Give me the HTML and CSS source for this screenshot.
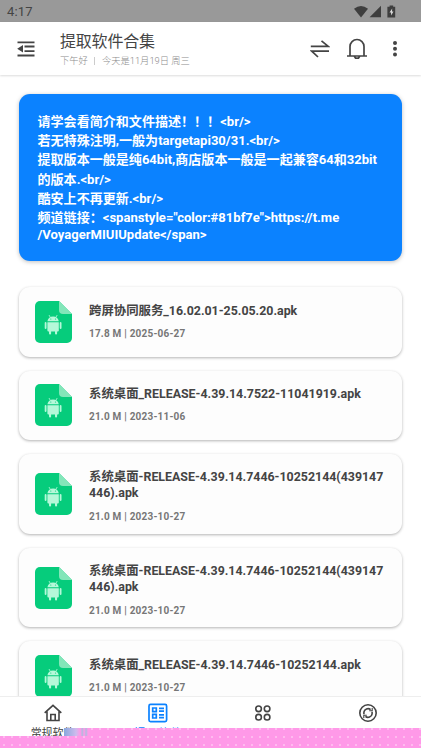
FILE: index.html
```html
<!DOCTYPE html>
<html lang="zh-CN">
<head>
<meta charset="utf-8">
<title>提取软件合集</title>
<link rel="stylesheet" href="styles.css">
</head>
<body>
<svg class="defs" width="0" height="0">
  <symbol id="apk" viewBox="0 0 37 42">
    <path fill="#06cc7c" d="M5 0H24L37 13V37a5 5 0 0 1-5 5H5a5 5 0 0 1-5-5V5a5 5 0 0 1 5-5z"/>
    <path fill="#83e6b9" d="M24 0L37 13H28a4 4 0 0 1-4-4z"/>
    <g fill="#b5f8d9">
      <path d="M12.4 20.3a5.8 5.8 0 0 1 11.4 0zM12.4 21.2H23.8V29.4a1 1 0 0 1-1 1H13.4a1 1 0 0 1-1-1z"/>
      <rect x="9.7" y="21" width="1.8" height="7" rx=".9"/><rect x="24.7" y="21" width="1.8" height="7" rx=".9"/>
      <rect x="14" y="29" width="2.1" height="4.5" rx="1"/><rect x="20" y="29" width="2.1" height="4.5" rx="1"/>
    </g>
    <path d="M14 14l1.2 2.2M22.2 14L21 16.2" stroke="#b5f8d9" stroke-width=".8"/>
    <circle cx="15.8" cy="18" r=".6" fill="#06cc7c"/><circle cx="20.5" cy="18" r=".6" fill="#06cc7c"/>
  </symbol>
</svg>
<div class="app">
  <div class="status">
    <span class="time">4:17</span>
    <svg width="44" height="14" viewBox="0 0 44 14" fill="#3e3e3e"><path d="M0 3.8Q7 -1.8 14 3.8L7 12.4z"/><path d="M27 .8V12.2H15.6z"/><path d="M33.4 1.7h2.2V.5h3.6v1.2h2V12.4h-7.8z"/><path d="M38.2 3.5L35.5 7.6h1.6v3L39.5 6.5h-1.5z" fill="#ddd"/></svg>
  </div>
  <header class="bar">
    <svg class="menu" width="18" height="16" viewBox="0 0 18 16" fill="#444"><path d="M.5 .4h17v1.8H.5zM7.5 4.6h10v1.8h-10zM7.5 9.2h10V11h-10zM.5 13.6h17v1.8H.5zM6 4v7.4L.2 7.7z"/></svg>
    <div class="heading"><h1>提取软件合集</h1><p>下午好<i></i>今天是11月19日 周三</p></div>
    <svg class="swap" width="20" height="18" viewBox="0 0 20 18" fill="none" stroke="#444" stroke-width="1.7"><path d="M.8 6.3H18.2L11.5 .9M19 11.2H1.8L8 17"/></svg>
    <svg class="bell" width="22" height="22" viewBox="0 0 22 22" fill="none" stroke="#444" stroke-width="1.7"><path d="M1 18H21M4 18V8.5a7 7 0 0 1 14 0V18M8.3 18.2a2.8 2.8 0 0 0 5.4 0"/></svg>
    <svg class="more" width="4" height="16" viewBox="0 0 4 16" fill="#444"><circle cx="2" cy="2" r="2"/><circle cx="2" cy="7.8" r="2"/><circle cx="2" cy="13.6" r="2"/></svg>
  </header>
  <main>
    <section class="notice">
      <p>请学会看简介和文件描述！！！&lt;br/&gt;</p>
      <p>若无特殊注明,一般为targetapi30/31.&lt;br/&gt;</p>
      <p>提取版本一般是纯64bit,商店版本一般是一起兼容64和32bit</p>
      <p>的版本.&lt;br/&gt;</p>
      <p>酷安上不再更新.&lt;br/&gt;</p>
      <p>频道链接：&lt;spanstyle="color:#81bf7e"&gt;https://t.me</p>
      <p class="latin">/VoyagerMIUIUpdate&lt;/span&gt;</p>
    </section>
    <article class="card"><svg class="file"><use href="#apk"/></svg><div><h2>跨屏协同服务_16.02.01-25.05.20.apk</h2><p>17.8 M | 2025-06-27</p></div></article>
    <article class="card"><svg class="file"><use href="#apk"/></svg><div><h2>系统桌面_RELEASE-4.39.14.7522-11041919.apk</h2><p>21.0 M | 2023-11-06</p></div></article>
    <article class="card tall"><svg class="file"><use href="#apk"/></svg><div><h2>系统桌面-RELEASE-4.39.14.7446-10252144(439147<br>446).apk</h2><p>21.0 M | 2023-10-27</p></div></article>
    <article class="card tall"><svg class="file"><use href="#apk"/></svg><div><h2>系统桌面-RELEASE-4.39.14.7446-10252144(439147<br>446).apk</h2><p>21.0 M | 2023-10-27</p></div></article>
    <article class="card"><svg class="file"><use href="#apk"/></svg><div><h2>系统桌面_RELEASE-4.39.14.7446-10252144.apk</h2><p>21.0 M | 2023-10-27</p></div></article>
  </main>
  <nav>
    <div class="tab first"><svg width="18" height="18" viewBox="0 0 18 18" fill="none" stroke="#444" stroke-width="1.6"><path d="M.7 8.8L9 1.3l8.3 7.5M3 7.5V16.5H15V7.5M6.8 16V10.5h4.4V16"/></svg><span>常规软件</span></div>
    <div class="tab active"><svg width="20" height="20" viewBox="0 0 20 20" fill="none" stroke="#0b82ff" stroke-width="1.7"><rect x="1" y="1.4" width="17.6" height="17.2" rx="1.5"/><path d="M4.7 5h3.6v3.6H4.7zM4.7 11.4h3.6V15H4.7zM11 5.3h5M11 8.2h5M11 11.8h5M11 14.7h5"/></svg><span>提取软件</span></div>
    <div class="tab"><svg width="18" height="18" viewBox="0 0 18 18" fill="none" stroke="#444" stroke-width="1.6"><circle cx="4.6" cy="4.8" r="2.8"/><circle cx="13.1" cy="4.8" r="2.8"/><circle cx="4.6" cy="13.2" r="2.8"/><circle cx="13.1" cy="13.2" r="2.8"/></svg></div>
    <div class="tab"><svg width="20" height="20" viewBox="0 0 20 20" fill="none" stroke="#444" stroke-width="1.6"><circle cx="10" cy="10" r="8.2"/><path d="M5.9 11.3V9.2a4.1 4.1 0 0 1 6.7-2.6M14.1 8.7v2.1a4.1 4.1 0 0 1-6.7 2.6"/><path d="M11.2 7.8h3V5M8.8 12.2h-3V15" stroke-width="1.1"/></svg></div>
  </nav>
  <div class="band"></div>
  <div class="smudge"></div>
</div>
</body>
</html>
```
FILE: styles.css
```css
* { box-sizing: border-box; margin: 0; padding: 0; }
body { width: 421px; height: 748px; overflow: hidden; background: #fff; color: #444; font-family: Roboto, "Noto Sans CJK SC", sans-serif; }
.defs { position: absolute; }
svg { display: block; flex: none; }
.app { position: relative; height: 748px; display: flex; flex-direction: column; overflow: hidden; }
.status { height: 22px; flex: none; background: #999; display: flex; align-items: center; justify-content: space-between; padding: 1px 23px 0 7px; }
.time { font-size: 13px; letter-spacing: .2px; color: #444; }
.bar { height: 53px; flex: none; display: flex; align-items: center; padding-left: 17px; box-shadow: 0 1px 2px rgba(0,0,0,.14); }
.menu { margin-top: 1px; }
.heading { margin-left: 25px; width: 250px; padding-top: 1px; }
.heading h1 { font-size: 16px; font-weight: 400; line-height: 22px; letter-spacing: -.2px; }
.heading p { font-size: 9.3px; line-height: 15px; color: #8c8c8c; font-weight: 300; }
.heading i { display: inline-block; width: 1px; height: 8px; background: #ccc; margin: 0 7px -1px 6px; }
.bell { margin-left: 16px; }
.more { margin-left: 25px; }
main { flex: 1; min-height: 0; overflow: hidden; padding: 19px 19px 0; }
.notice { height: 167px; border-radius: 11px; background: #0b82ff; color: #fff; padding: 18px 18.5px; font-size: 13.05px; font-weight: 700; line-height: 19.2px; white-space: nowrap; box-shadow: 0 1px 4px rgba(0,0,0,.25); margin-bottom: 26.4px; }
.notice .latin { line-height: 15px; }
.card { height: 69.4px; display: flex; align-items: center; padding-left: 16px; background: #fdfdfd; border-radius: 11px; box-shadow: 0 1px 3px rgba(0,0,0,.3); margin-bottom: 14px; }
.card.tall { height: 79.6px; }
.file { width: 37px; height: 42px; margin-right: 17px; }
.card h2 { font-size: 12.4px; line-height: 16px; font-weight: 700; white-space: nowrap; }
.card p { margin-top: 7px; font-size: 10px; letter-spacing: .2px; line-height: 16px; font-weight: 700; color: #777; white-space: nowrap; }
.tall > div { padding-top: 7px; }
.tall p { margin-top: 8px; }
nav { height: 52px; flex: none; display: flex; border-top: 1px solid #eee; background: #fff; }
.tab { flex: 1; display: flex; flex-direction: column; align-items: center; padding-top: 6px; }
.tab svg { height: 20px; }
.tab span { font-size: 11px; line-height: 14px; margin-top: 4px; }
.tab.active { color: #0b82ff; }
.tab.active span { font-size: 12px; }
.band { position: absolute; left: 0; right: 0; bottom: 0; height: 20px; background: radial-gradient(circle at 4px 4px, #ffcdf3 0, #ffcdf3 .5px, transparent 1.1px) 0 -3px / 8px 8px, #ff99e8; clip-path: polygon(88px 0, 100% 0, 100% 100%, 0 100%, 0 8px, 88px 8px); }
.smudge { position: absolute; left: 64px; top: 728px; width: 24px; height: 8px; background: linear-gradient(90deg, #88a8dd, #cdbbed 50%, #ff99e8 68%, #b3b9df 76%, #ff99e8 84%, #b3b9df 92%, #ff99e8); }
```
